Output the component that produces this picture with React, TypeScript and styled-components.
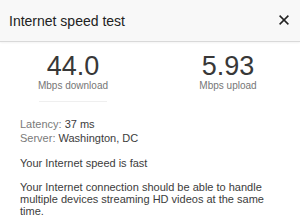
import React from 'react';
import styled, { createGlobalStyle } from 'styled-components';

const GlobalStyle = createGlobalStyle`
  html, body {
    margin: 0;
    padding: 0;
    background: #ffffff;
  }
  body {
    font-family: "Liberation Sans", Arial, sans-serif;
  }
`;

const Panel = styled.div`
  width: 300px;
  height: 224px;
  overflow: hidden;
  background: #ffffff;
`;

const Header = styled.div`
  display: flex;
  align-items: center;
  justify-content: space-between;
  height: 41px;
  padding: 0 11px 0 9px;
  background: #f8f8f8;
  border-bottom: 1px solid #d9d9d9;
  box-shadow: 0 1px 2px rgba(0, 0, 0, 0.05);
`;

const Title = styled.div`
  font-size: 14px;
  line-height: 16px;
  color: #222222;
`;

const CloseButton = styled.button`
  display: flex;
  align-items: center;
  justify-content: center;
  width: 10px;
  height: 10px;
  padding: 0;
  margin-top: -1px;
  border: none;
  background: none;
  cursor: pointer;
`;

const Stats = styled.div`
  display: grid;
  grid-template-columns: 130px 130px;
  column-gap: 25px;
  padding: 11px 0 0 8px;
`;

const Stat = styled.div`
  display: flex;
  flex-direction: column;
  align-items: center;
`;

const Value = styled.div`
  font-size: 27px;
  line-height: 27px;
  color: #383838;
`;

const Unit = styled.div`
  font-size: 10px;
  line-height: 11px;
  color: #767676;
`;

const Track = styled.div<{ visible: boolean }>`
  width: 68px;
  height: 1px;
  margin-top: 10px;
  background: ${p => (p.visible ? '#efefef' : 'transparent')};
`;

const Body = styled.div`
  padding: 15px 20px 0 20px;
  color: #3c3c3c;
`;

const Details = styled.div`
  font-size: 11px;
  line-height: 14px;
`;

const Label = styled.span`
  color: #7a7a7a;
`;

const Verdict = styled.div`
  margin-top: 11px;
  font-size: 11px;
  line-height: 14px;
`;

const Note = styled.p`
  margin: 11px 0 0;
  font-size: 11px;
  line-height: 12px;
`;

const App: React.FC = () => {
  return (
    <Panel>
      <GlobalStyle />
      <Header>
        <Title>Internet speed test</Title>
        <CloseButton aria-label="Close">
          <svg width="10" height="10" viewBox="0 0 10 10">
            <path d="M0.6 0.6 L9.4 9.4 M9.4 0.6 L0.6 9.4" stroke="#222" strokeWidth="1.5" />
          </svg>
        </CloseButton>
      </Header>

      <Stats>
        <Stat>
          <Value>44.0</Value>
          <Unit>Mbps download</Unit>
          <Track visible />
        </Stat>
        <Stat>
          <Value>5.93</Value>
          <Unit>Mbps upload</Unit>
          <Track visible={false} />
        </Stat>
      </Stats>

      <Body>
        <Details>
          <div><Label>Latency:</Label> 37 ms</div>
          <div><Label>Server:</Label> Washington, DC</div>
        </Details>
        <Verdict>Your Internet speed is fast</Verdict>
        <Note>
          Your Internet connection should be able to handle multiple devices streaming HD videos at the same time.
        </Note>
      </Body>
    </Panel>
  );
};

export default App;
